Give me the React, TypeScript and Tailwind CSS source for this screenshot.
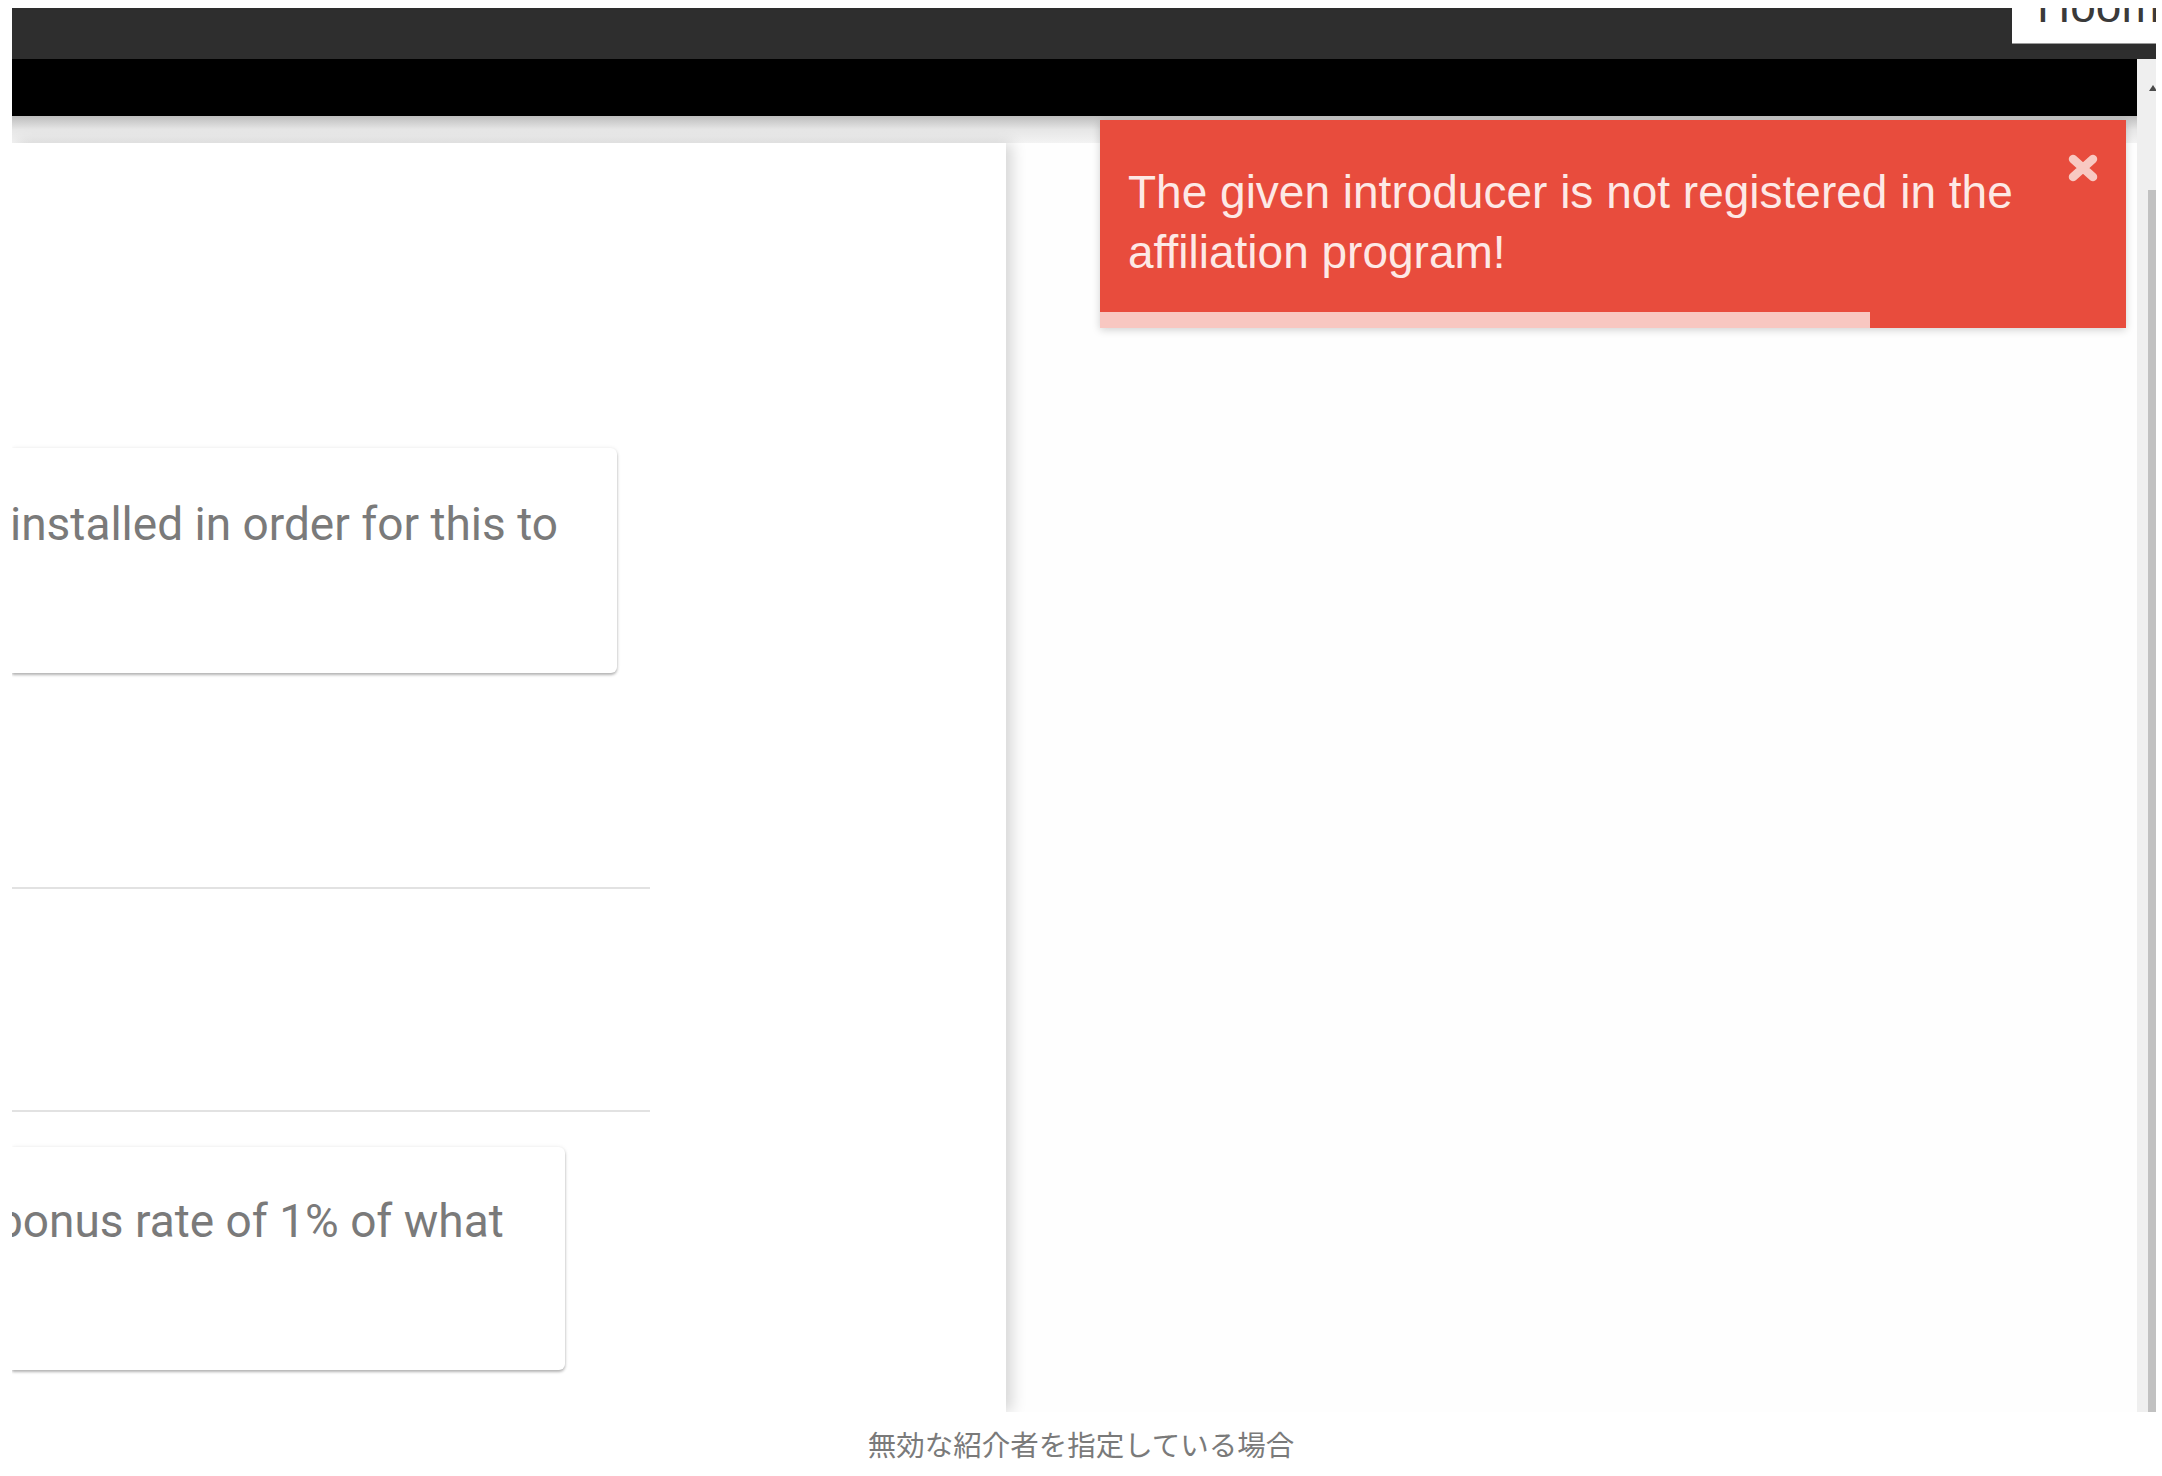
export default function App() {
  return (
    <div className="min-h-[1476px] w-full bg-white">
      <div className="ml-[12px] mt-[8px] flex h-[1404px] w-[2144px] flex-col overflow-hidden">
        {/* top dark bar */}
        <div className="flex h-[51px] shrink-0 justify-end bg-[#2e2e2e]">
          <div className="h-[35px] w-[144px] overflow-hidden bg-white pl-[25px] shadow-[0_1px_0_#9a9a9a]">
            <div className="-mt-[25px] whitespace-nowrap font-['Liberation_Sans',Arial,sans-serif] text-[46px] leading-none text-[#3a3a3a]">
              Hoom
            </div>
          </div>
        </div>

        <div className="flex min-h-0 flex-1">
          {/* main column */}
          <div className="relative flex min-w-0 flex-1 flex-col bg-[#fefefe]">
            <div className="h-[57px] shrink-0 bg-black" />
            <div className="h-[27px] shrink-0 bg-linear-to-b from-[#bdbdbd] via-[#e6e6e6] to-[#f3f3f3]" />
            <div className="flex min-h-0 flex-1">
              <div className="flex w-[994px] flex-col bg-white shadow-[6px_0_14px_rgba(0,0,0,0.16)]">
                {/* inner card 1 */}
                <div className="mt-[305px] h-[225px] w-[605px] rounded-r-[6px] bg-white pt-[49px] shadow-[0_2px_3px_rgba(0,0,0,0.28),0_0_4px_rgba(0,0,0,0.08)]">
                  <div className="-ml-[2px] whitespace-nowrap font-['Roboto',sans-serif] text-[46px] leading-[55px] text-[#7a7a7a]">
                    installed in order for this to
                  </div>
                </div>
                {/* dividers */}
                <div className="mt-[214px] h-[2px] w-[638px] bg-[#e2e2e2]" />
                <div className="mt-[221px] h-[2px] w-[638px] bg-[#e2e2e2]" />
                {/* inner card 2 */}
                <div className="mt-[35px] h-[223px] w-[553px] overflow-hidden rounded-r-[6px] bg-white pt-[47px] shadow-[0_2px_3px_rgba(0,0,0,0.28),0_0_4px_rgba(0,0,0,0.08)]">
                  <div className="-ml-[15px] whitespace-nowrap font-['Roboto',sans-serif] text-[46px] leading-[55px] text-[#7a7a7a]">
                    bonus rate of 1% of what
                  </div>
                </div>
              </div>
              <div className="flex-1" />
            </div>

            {/* toast */}
            <div className="absolute left-[1088px] top-[61px] h-[208px] w-[1026px] bg-[#e84c3d] pl-[28px] pt-[42px] shadow-[0_2px_8px_rgba(0,0,0,0.18)]">
              <div className="whitespace-nowrap font-['Liberation_Sans',Arial,sans-serif] text-[46px] leading-[60px] text-[#fde9e6]">
                The given introducer is not registered in the
                <br />
                affiliation program!
              </div>
              <svg
                className="absolute right-[25px] top-[32px]"
                width="36"
                height="32"
                viewBox="0 0 36 32"
              >
                <path
                  d="M8 7 L28 25 M28 7 L8 25"
                  stroke="#f8c9c2"
                  strokeWidth="8.5"
                  strokeLinecap="round"
                  fill="none"
                />
              </svg>
              <div className="absolute bottom-0 left-0 h-[16px] w-[770px] bg-[#f8c7c1]" />
            </div>
          </div>

          {/* scrollbar */}
          <div className="relative w-[19px] shrink-0 bg-[#efefef]">
            <svg className="absolute left-[12px] top-[25px]" width="8" height="7" viewBox="0 0 8 7">
              <path d="M0 7 L4 1 L8 7 Z" fill="#4a4a4a" />
            </svg>
            <div className="ml-[11px] mt-[131px] h-[1300px] w-[8px] bg-[#c1c1c1]" />
          </div>
        </div>
      </div>

      <div className="mt-[12px] text-center font-['Noto_Sans_CJK_JP',sans-serif] text-[28.5px] leading-[40px] text-[#7a7a7a]">
        無効な紹介者を指定している場合
      </div>
    </div>
  );
}
